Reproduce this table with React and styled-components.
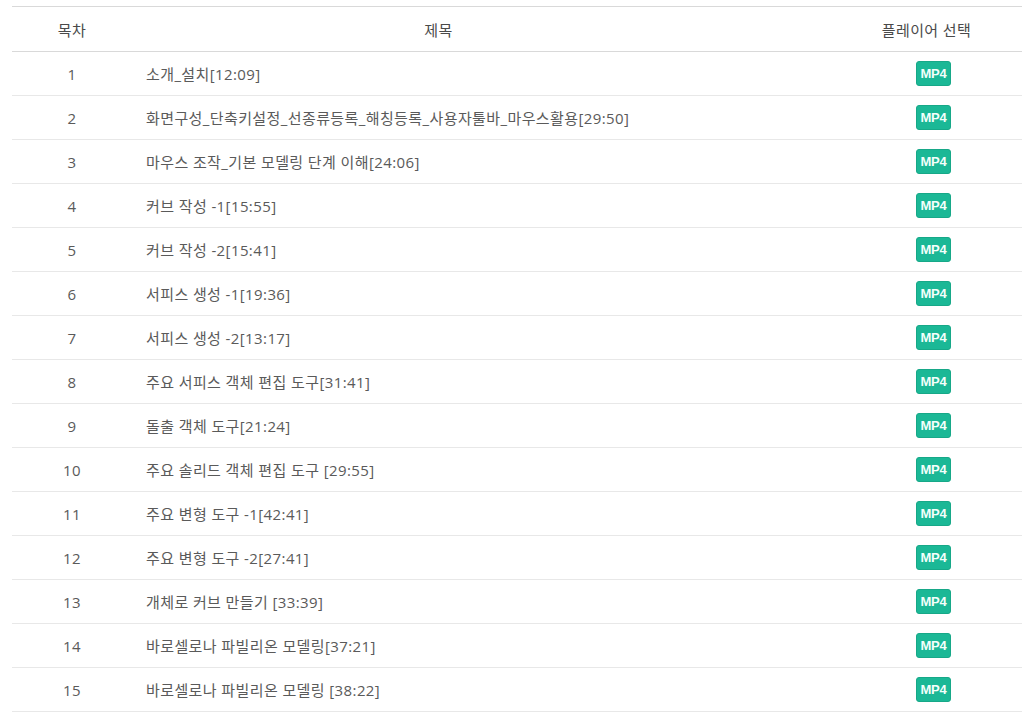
import React from "react"
import styled, { createGlobalStyle } from "styled-components"

const GlobalStyle = createGlobalStyle`
  html, body {
    margin: 0;
    padding: 0;
    background: #fff;
  }
  body {
    font-family: "Open Sans", "Noto Sans CJK KR", sans-serif;
  }
`

const Page = styled("div")`
  padding: 6px 0 0 12px;
  overflow: hidden;
`

const Table = styled("table")`
  width: 1010px;
  border-collapse: collapse;
  border-top: 1px solid #d9d9d9;
  font-size: 15px;
  letter-spacing: 0.4px;
  color: #5a5a5a;
`

const HeadCell = styled("th")`
  height: 44px;
  padding: 0 ${({ shift }) => (shift ? `${shift * 2}px` : "0")} 0 0;
  font-weight: 400;
  color: #4a4a4a;
  text-align: center;
  border-bottom: 1px solid #d9d9d9;
  width: ${({ w }) => (w ? `${w}px` : "auto")};
`

const Row = styled("tr")`
  height: 44px;
  border-bottom: 1px solid #e8e8e8;
`

const NumCell = styled("td")`
  text-align: center;
  padding: 0;
`

const TitleCell = styled("td")`
  text-align: left;
  padding: 0 0 0 14px;
`

const PlayerCell = styled("td")`
  text-align: center;
  padding: 0;
`

const Badge = styled("span")`
  display: inline-flex;
  align-items: center;
  justify-content: center;
  width: 35px;
  height: 25px;
  box-sizing: border-box;
  border-radius: 3px;
  background: #1bb896;
  border: 1px solid #17a888;
  color: #f4fffb;
  font-family: "Liberation Sans", Arial, sans-serif;
  font-weight: 700;
  font-size: 13px;
  letter-spacing: -0.3px;
  vertical-align: middle;
`

const items = [
  "소개_설치[12:09]",
  "화면구성_단축키설정_선종류등록_해칭등록_사용자툴바_마우스활용[29:50]",
  "마우스 조작_기본 모델링 단계 이해[24:06]",
  "커브 작성 -1[15:55]",
  "커브 작성 -2[15:41]",
  "서피스 생성 -1[19:36]",
  "서피스 생성 -2[13:17]",
  "주요 서피스 객체 편집 도구[31:41]",
  "돌출 객체 도구[21:24]",
  "주요 솔리드 객체 편집 도구 [29:55]",
  "주요 변형 도구 -1[42:41]",
  "주요 변형 도구 -2[27:41]",
  "개체로 커브 만들기 [33:39]",
  "바로셀로나 파빌리온 모델링[37:21]",
  "바로셀로나 파빌리온 모델링 [38:22]",
]

export default function App() {
  return (
    <Page>
      <GlobalStyle />
      <Table>
        <thead>
          <tr>
            <HeadCell w={120}>목차</HeadCell>
            <HeadCell shift={50}>제목</HeadCell>
            <HeadCell w={163} shift={7}>플레이어 선택</HeadCell>
          </tr>
        </thead>
        <tbody>
          {items.map((title, i) => (
            <Row key={i}>
              <NumCell>{i + 1}</NumCell>
              <TitleCell>{title}</TitleCell>
              <PlayerCell>
                <Badge>MP4</Badge>
              </PlayerCell>
            </Row>
          ))}
        </tbody>
      </Table>
    </Page>
  )
}
